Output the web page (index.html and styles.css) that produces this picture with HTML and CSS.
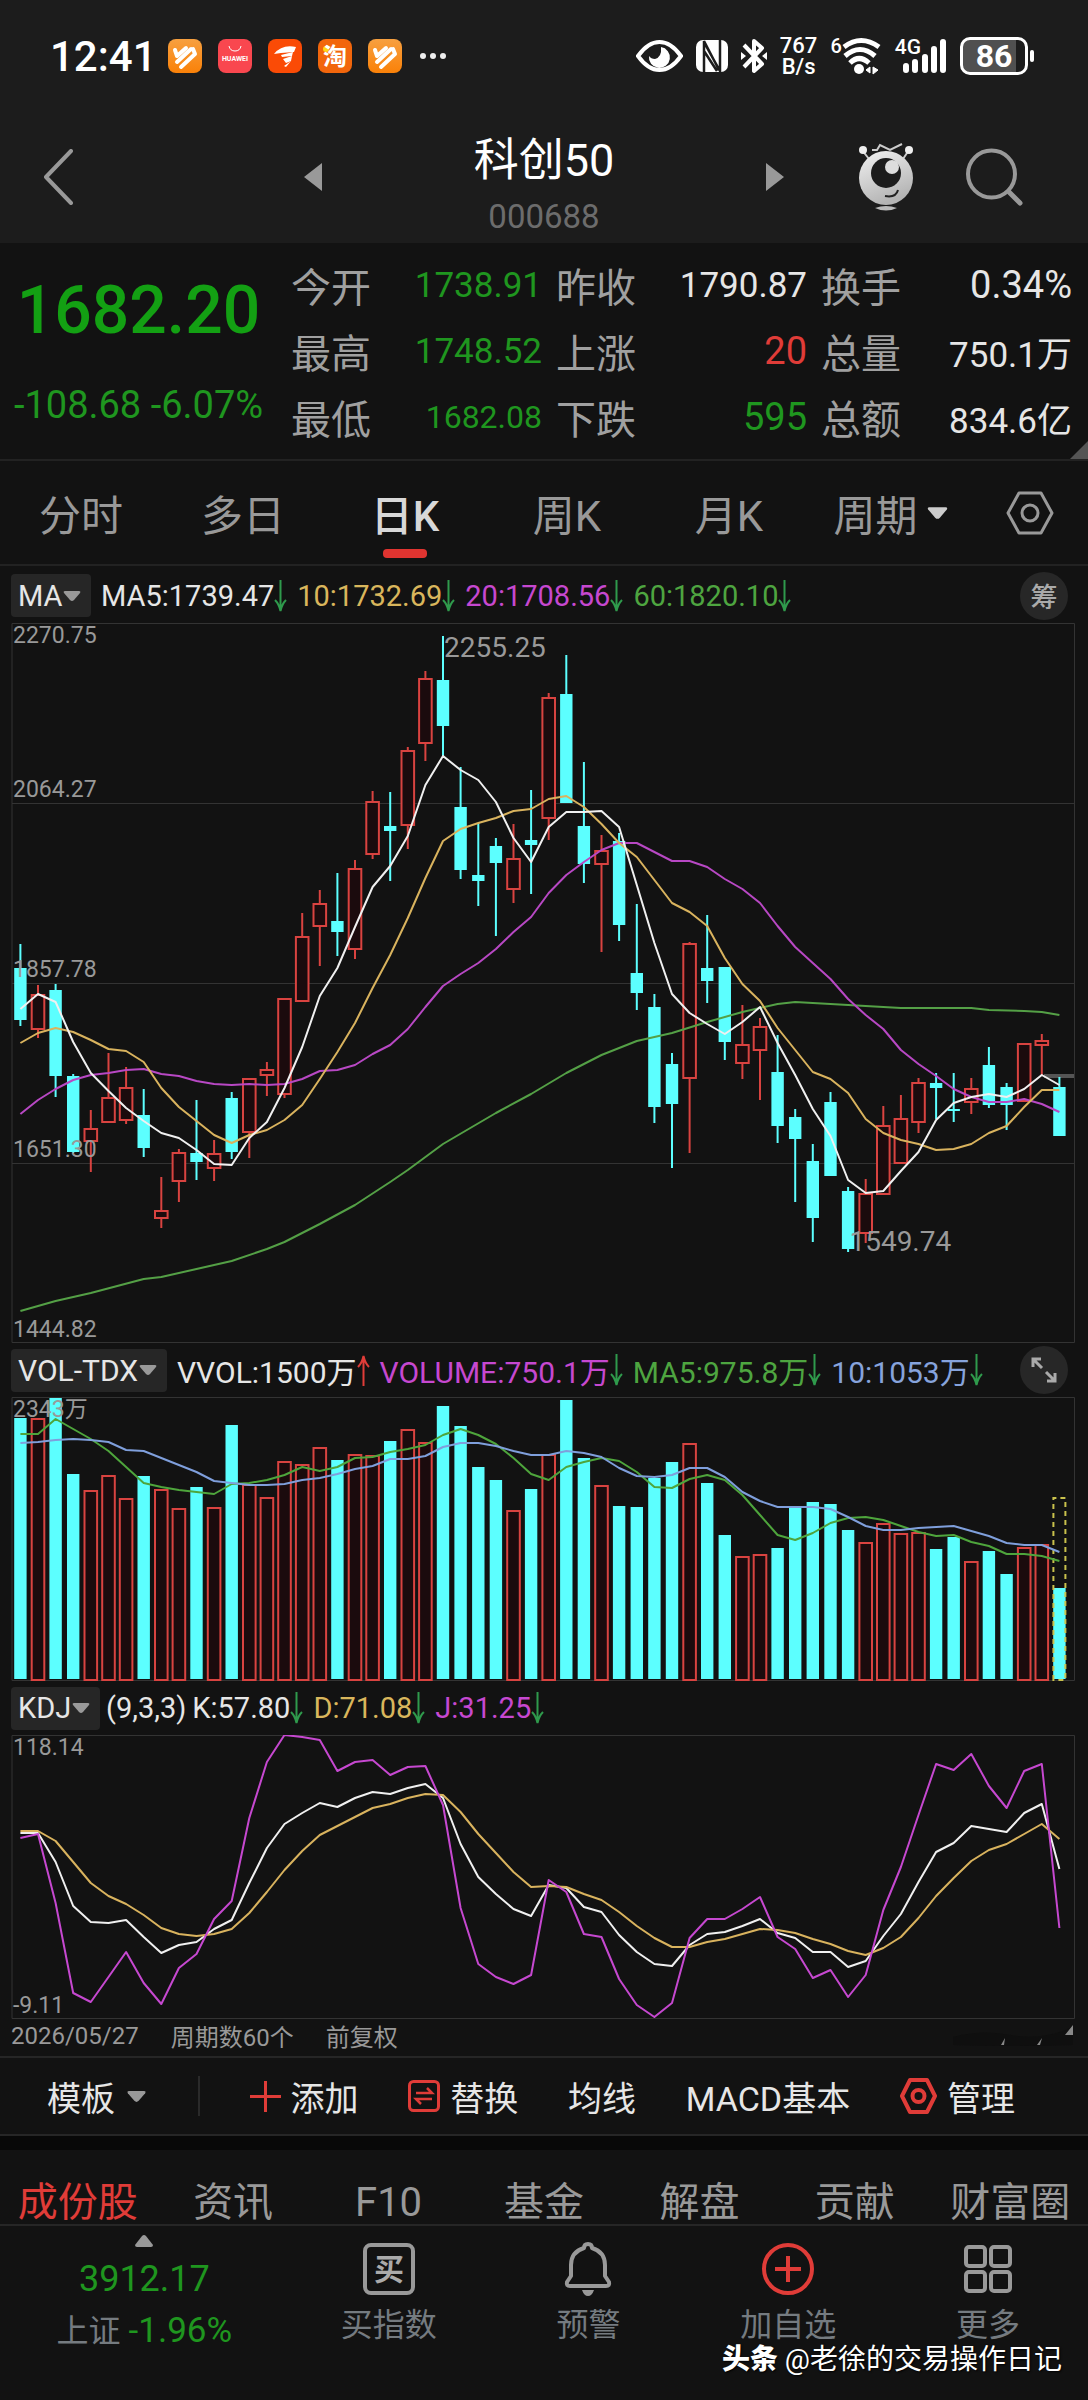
FILE: index.html
```html
<!DOCTYPE html>
<html lang="zh-CN">
<head>
<meta charset="utf-8">
<meta name="viewport" content="width=device-width, initial-scale=1">
<title>科创50 000688</title>
<link rel="stylesheet" href="styles.css">
</head>
<body>
<svg width="0" height="0" class="defs" aria-hidden="true">
  <defs>
    <linearGradient id="orange" x1="0" y1="0" x2="0" y2="1"><stop offset="0" stop-color="#f7a040"/><stop offset="1" stop-color="#fa8108"/></linearGradient>
    <linearGradient id="silver" x1="0" y1="0" x2="0.4" y2="1"><stop offset="0" stop-color="#f2f2f2"/><stop offset="1" stop-color="#b4b4b4"/></linearGradient>
    <symbol id="down" viewBox="0 0 13 32"><path d="M6.5 0V31M1 20Q5 24 6.5 31Q8 24 12 20" fill="none" stroke="#2f9a4c" stroke-width="2"/></symbol>
    <symbol id="up" viewBox="0 0 13 32"><path d="M6.5 32V2M1 13Q5 9 6.5 2Q8 9 12 13" fill="none" stroke="#e03c38" stroke-width="2"/></symbol>
    <symbol id="caret" viewBox="0 0 18 12"><path d="M2 1H16Q18 1 17 3L11 10Q9 12 7 10L1 3Q0 1 2 1Z" fill="currentColor"/></symbol>
    <symbol id="hex" viewBox="0 0 48 44"><path d="M13 2H35L46 22L35 42H13L2 22Z" fill="none" stroke="currentColor" stroke-width="3" stroke-linejoin="round"/><circle cx="24" cy="22" r="8" fill="none" stroke="currentColor" stroke-width="3"/></symbol>
    <symbol id="stripes" viewBox="0 0 34 34"><rect width="34" height="34" rx="8" fill="url(#orange)"/><g fill="none" stroke="#fff" stroke-width="4" stroke-linecap="round" stroke-linejoin="round"><path d="M7 11L9 17L18 9"/><path d="M9 23L23 10"/><path d="M13 28L27 15L25 10"/></g></symbol>
  </defs>
</svg>

<header class="top">
  <div class="status">
    <time class="clock">12:41</time>
    <div class="apps">
      <svg class="app" viewBox="0 0 34 34"><use href="#stripes"/></svg>
      <svg class="app" viewBox="0 0 34 34"><rect width="34" height="34" rx="8" fill="#f9474f"/><path d="M11 7Q12 12 17 12Q22 12 23 7" fill="none" stroke="#fff" stroke-width="1"/><text x="17" y="22" text-anchor="middle" class="huawei">HUAWEI</text></svg>
      <svg class="app" viewBox="0 0 34 34"><rect width="34" height="34" rx="8" fill="#fa4b06"/><g fill="#fff"><path d="M6 15Q14 5 28 8L26 13L13 14Z"/><path d="M13 16L25 13L24 17L14 18Z"/><path d="M15 20L24 17L23 22L18 24Z"/><path d="M16 27L23 22L18 28Z"/></g></svg>
      <svg class="app" viewBox="0 0 34 34"><rect width="34" height="34" rx="8" fill="#f2660c"/><circle cx="8" cy="10" r="3" fill="#ffd617"/><text x="17" y="26" text-anchor="middle" class="tao">淘</text></svg>
      <svg class="app" viewBox="0 0 34 34"><use href="#stripes"/></svg>
    </div>
    <svg class="dots" viewBox="0 0 26 6"><circle cx="3" cy="3" r="3"/><circle cx="13" cy="3" r="3"/><circle cx="23" cy="3" r="3"/></svg>
    <div class="signals">
      <svg width="47" height="34" viewBox="0 0 47 34"><path d="M2 17Q12 3 23.500 3Q35 3 45 17Q35 31 23.500 31Q12 31 2 17Z" fill="none" stroke="#fff" stroke-width="4"/><path d="M25 8A10.500 10.500 0 1 1 13 17Q15 20 19 20Q26 18 25 8Z" fill="#fff"/></svg>
      <svg width="32" height="34" viewBox="0 0 32 34"><rect y="1" width="32" height="32" rx="7" fill="#fff"/><path d="M8 33V2L23 31M24 1V32L9 5M8 12L21 32" fill="none" stroke="#1c1c1c" stroke-width="2.500"/></svg>
      <svg width="26" height="38" viewBox="0 0 26 38"><g fill="none" stroke="#fff" stroke-width="4"><path d="M3 8L21 27L13 34V4L21 11L3 30" stroke-linejoin="round"/></g><path d="M0 15L5 19L0 23ZM26 15L21 19L26 23Z" fill="#fff"/></svg>
      <div class="speed"><span>767</span><span>B/s</span></div>
      <div class="wifi"><small>6</small><svg width="40" height="38" viewBox="0 0 40 38"><g fill="none" stroke="#fff" stroke-width="5"><path d="M2 10Q19 -3 37 10"/><path d="M3 19Q18 6 33 19"/><path d="M8 26Q17 17 27 26"/></g><circle cx="17" cy="32" r="5" fill="#fff"/><path d="M24 33L28 30V36ZM31 30V37L36 33Z" fill="#fff" stroke="#fff"/></svg></div>
      <div class="cell"><small>4G</small><svg width="45" height="36" viewBox="0 0 45 36"><g stroke="#fff" stroke-width="6" stroke-linecap="round"><path d="M4 28V32M13 24V32M23 19V32M32 11V32M41 4V32"/></g></svg></div>
      <div class="battery">86</div>
    </div>
  </div>
  <div class="titlebar">
    <button class="icon back" aria-label="返回"><svg width="30" height="56" viewBox="0 0 30 56"><path d="M28 2L3 28L28 54" fill="none" stroke="#999" stroke-width="4" stroke-linecap="round" stroke-linejoin="round"/></svg></button>
    <div class="switcher">
      <button class="icon" aria-label="上一个"><svg width="18" height="28" viewBox="0 0 18 28"><path d="M18 0V28L0 14Z" fill="#999"/></svg></button>
      <div class="name"><h1>科创50</h1><p>000688</p></div>
      <button class="icon" aria-label="下一个"><svg width="18" height="28" viewBox="0 0 18 28"><path d="M0 0V28L18 14Z" fill="#999"/></svg></button>
    </div>
    <div class="actions">
      <button class="icon" aria-label="助手"><svg width="56" height="70" viewBox="0 0 56 70"><path d="M4 8L11 17M51 8L45 17M14 8L19 8L22 3L32 8L44 2" fill="none" stroke="#ccc" stroke-width="2"/><circle cx="5" cy="8" r="4" fill="#eee"/><circle cx="51" cy="8" r="4" fill="#eee"/><circle cx="28" cy="36" r="27" fill="url(#silver)"/><circle cx="28" cy="31" r="15" fill="#1c1c1c"/><circle cx="34" cy="25" r="7" fill="#ddd"/><path d="M27 54Q38 56 40 48" fill="none" stroke="#222" stroke-width="2"/><path d="M17 66Q28 62 39 66Q28 71 17 66Z" fill="#bbb"/></svg></button>
      <button class="icon" aria-label="搜索"><svg width="57" height="58" viewBox="0 0 57 58"><circle cx="25.500" cy="26" r="23.500" fill="none" stroke="#999" stroke-width="4"/><path d="M43 44L54 55" stroke="#999" stroke-width="5" stroke-linecap="round"/></svg></button>
    </div>
  </div>
</header>

<section class="quote">
  <div class="price"><strong>1682.20</strong><span>-108.68 -6.07%</span></div>
  <dl>
    <div><dt>今开</dt><dd class="green">1738.91</dd></div>
    <div><dt>昨收</dt><dd>1790.87</dd></div>
    <div><dt>换手</dt><dd class="big">0.34%</dd></div>
    <div><dt>最高</dt><dd class="green">1748.52</dd></div>
    <div><dt>上涨</dt><dd class="big red">20</dd></div>
    <div><dt>总量</dt><dd>750.1万</dd></div>
    <div><dt>最低</dt><dd class="small green">1682.08</dd></div>
    <div><dt>下跌</dt><dd class="big green">595</dd></div>
    <div><dt>总额</dt><dd>834.6亿</dd></div>
  </dl>
</section>

<nav class="periods">
  <button>分时</button><button>多日</button><button class="on">日K</button><button>周K</button><button>月K</button>
  <button class="more">周期<svg width="23" height="14" viewBox="0 0 18 12"><use href="#caret"/></svg></button>
  <button aria-label="设置"><svg width="48" height="44"><use href="#hex"/></svg></button>
</nav>

<main>
  <section>
    <div class="legend first">
      <div class="chip"><select aria-label="主图指标"><option>MA</option></select><svg width="18" height="12"><use href="#caret"/></svg></div>
      <span>MA5:1739.47<svg class="arrow"><use href="#down"/></svg></span>
      <span class="yellow">10:1732.69<svg class="arrow"><use href="#down"/></svg></span>
      <span class="pink">20:1708.56<svg class="arrow"><use href="#down"/></svg></span>
      <span class="lime">60:1820.10<svg class="arrow"><use href="#down"/></svg></span>
      <button class="round">筹</button>
    </div>
    <div class="panel tall">
      <svg id="candles" viewBox="0 0 1064 720"></svg>
      <div class="axis rows">
        <div><span>2270.75</span><span>2064.27</span></div>
        <div><span>1857.78</span></div>
        <div><span>1651.30</span></div>
        <div><span>1444.82</span></div>
      </div>
      <span class="mark high">2255.25</span>
      <span class="mark low">1549.74</span>
    </div>
  </section>
  <section>
    <div class="legend wide">
      <div class="chip"><select aria-label="成交量指标"><option>VOL-TDX</option></select><svg width="18" height="12"><use href="#caret"/></svg></div>
      <span>VVOL:1500万<svg class="arrow"><use href="#up"/></svg></span>
      <span class="pink">VOLUME:750.1万<svg class="arrow"><use href="#down"/></svg></span>
      <span class="lime">MA5:975.8万<svg class="arrow"><use href="#down"/></svg></span>
      <span class="blue">10:1053万<svg class="arrow"><use href="#down"/></svg></span>
      <button class="round" aria-label="全屏"><svg width="26" height="26" viewBox="0 0 26 26"><path d="M2 10V2H10M2 2L11 11M24 16V24H16M24 24L15 15" fill="none" stroke="#aaa" stroke-width="3"/></svg></button>
    </div>
    <div class="panel">
      <svg id="volume" viewBox="0 0 1064 284"></svg>
      <div class="axis ends"><span>2343万</span></div>
    </div>
  </section>
  <section>
    <div class="legend">
      <div class="chip"><select aria-label="副图指标"><option>KDJ</option></select><svg width="18" height="12"><use href="#caret"/></svg></div>
      <span class="params">(9,3,3)</span>
      <span>K:57.80<svg class="arrow"><use href="#down"/></svg></span>
      <span class="yellow">D:71.08<svg class="arrow"><use href="#down"/></svg></span>
      <span class="pink">J:31.25<svg class="arrow"><use href="#down"/></svg></span>
    </div>
    <div class="panel">
      <svg id="kdj" viewBox="0 0 1064 284"></svg>
      <div class="axis ends"><span>118.14</span><span>-9.11</span></div>
    </div>
  </section>
  <div class="range"><span>2026/05/27</span><span>周期数60个</span><span>前复权</span>
    <svg width="124" height="26" viewBox="0 0 124 26"><path d="M2 14Q30 6 60 12T122 4V22Q60 24 2 22Z" fill="#0f0f0f"/><path d="M50 22L54 15L53 22ZM86 22L91 15L89 22ZM114 12L122 2V12Z" fill="#888"/></svg></div>
</main>

<div class="tools">
  <button>模板<svg class="grey" width="23" height="13" viewBox="0 0 18 12"><use href="#caret"/></svg></button>
  <i></i>
  <button><svg width="31" height="31" viewBox="0 0 31 31"><path d="M15.500 0V31M0 15.500H31" stroke="#e03c38" stroke-width="3"/></svg>添加</button>
  <button><svg width="32" height="32" viewBox="0 0 32 32"><g fill="none" stroke="#e03c38" stroke-width="3"><rect x="1.500" y="1.500" width="29" height="29" rx="4"/><path d="M8 13H24L19 8M24 19H8L13 24" stroke-width="2.500"/></g></svg>替换</button>
  <button>均线</button>
  <button>MACD基本</button>
  <button><svg class="red" width="37" height="36" viewBox="0 0 37 36"><g fill="none" stroke="currentColor" stroke-width="4"><path d="M10 2H27L35 18L27 34H10L2 18Z" stroke-linejoin="round"/><circle cx="18.500" cy="18" r="6"/></g></svg>管理</button>
</div>

<nav class="tabs">
  <a href="#" class="on">成份股</a><a href="#">资讯</a><a href="#">F10</a><a href="#">基金</a><a href="#">解盘</a><a href="#">贡献</a><a href="#">财富圈</a>
</nav>

<footer class="dock">
  <button class="index"><svg width="20" height="12" viewBox="0 0 20 12"><path d="M8 1Q10 -1 12 1L19 10Q19 12 17 12H3Q1 12 1 10Z" fill="#999"/></svg><b>3912.17</b><span>上证 <em>-1.96%</em></span></button>
  <button><svg width="52" height="52" viewBox="0 0 52 52"><rect x="2" y="2" width="48" height="48" rx="6" fill="none" stroke="#999" stroke-width="4"/><text x="26" y="37" text-anchor="middle" class="buy">买</text></svg>买指数</button>
  <button><svg width="52" height="56" viewBox="0 0 52 56"><path d="M26 3Q22 3 22 7Q9 11 9 24V35L5 41Q4 45 8 45H44Q48 45 47 41L43 35V24Q43 11 30 7Q30 3 26 3Z" fill="none" stroke="#999" stroke-width="4" stroke-linejoin="round"/><path d="M20 49H32Q30 55 26 55Q22 55 20 49Z" fill="#999"/></svg>预警</button>
  <button><svg width="54" height="54" viewBox="0 0 54 54"><g fill="none" stroke="#e03c38" stroke-width="4"><circle cx="27" cy="27" r="24"/><path d="M27 14V40M14 27H40"/></g></svg>加自选</button>
  <button><svg width="50" height="50" viewBox="0 0 50 50"><g fill="none" stroke="#999" stroke-width="4"><rect x="3" y="3" width="19" height="19" rx="3"/><rect x="28" y="3" width="19" height="19" rx="3"/><rect x="3" y="28" width="19" height="19" rx="3"/><rect x="28" y="28" width="19" height="19" rx="3"/></g></svg>更多</button>
  <p class="credit"><b>头条</b> @老徐的交易操作日记</p>
</footer>
<script src="charts.js"></script>
</body>
</html>
```
FILE: styles.css
```css
* { box-sizing: border-box; margin: 0; padding: 0; }
body {
  background: #121212;
  color: #e6e6e6;
  font-family: Roboto, "Noto Sans CJK SC", sans-serif;
  white-space: nowrap;
}
button, select { background: none; border: 0; color: inherit; font: inherit; }
svg { display: block; flex: none; }
.defs { position: absolute; }
em, i { font-style: normal; }

.green { color: #1f961f; }
.red { color: #e03c38; }
.yellow { color: #d9b65c; }
.pink { color: #c648d0; }
.lime { color: #4ea540; }
.blue { color: #86a3dc; }

/* Status bar */
.top { background: #1c1c1c; }
.status { display: flex; align-items: center; height: 110px; padding: 2px 52px 0 50px; color: #fff; }
.clock { width: 118px; font-size: 42px; font-weight: 500; }
.apps { display: flex; gap: 16px; }
.app { width: 34px; height: 34px; }
.huawei { fill: #fff; font-size: 7px; font-weight: 700; }
.tao { fill: #fff; font-size: 24px; font-weight: 700; }
.dots { width: 26px; height: 6px; margin-left: 18px; fill: #eee; }
.signals { display: flex; align-items: center; gap: 13px; margin-left: auto; }
.speed { display: grid; line-height: 21px; font-size: 22px; font-weight: 500; text-align: center; }
.wifi, .cell { display: flex; align-items: flex-start; }
.wifi small { font-size: 20px; line-height: 18px; font-weight: 500; }
.cell small { font-size: 21px; line-height: 18px; font-weight: 500; }
.cell small + svg { margin-left: -19px; }
.battery {
  position: relative;
  width: 68px;
  height: 38px;
  margin-right: 8px;
  border: 3px solid #fff;
  border-radius: 10px;
  background: linear-gradient(90deg, #505050 86%, transparent 86%);
  font-size: 32px;
  font-weight: 700;
  line-height: 32px;
  text-align: center;
}
.battery::after { content: ""; position: absolute; left: 67px; top: 10px; width: 4px; height: 12px; border-radius: 2px; background: #fff; }

/* Title bar */
.titlebar { display: grid; grid-template-columns: 1fr 480px 1fr; align-items: center; height: 133px; }
.back { justify-self: start; margin-left: 43px; }
.switcher { display: flex; align-items: center; justify-content: space-between; }
.name { padding-top: 14px; text-align: center; }
.name h1 { font-size: 45px; font-weight: 400; line-height: 60px; color: #fff; }
.name p { padding-top: 6px; font-size: 33px; line-height: 40px; color: #6c6c6c; }
.actions { display: flex; align-items: center; justify-content: flex-end; gap: 52px; padding-right: 65px; }

/* Quote */
.quote { position: relative; display: grid; grid-template-columns: 277px 1fr; height: 218px; border-bottom: 2px solid #222; }
.quote::after { content: ""; position: absolute; right: 0; bottom: 0; width: 18px; height: 18px; background: #555; clip-path: polygon(100% 0, 100% 100%, 0 100%); }
.price { display: flex; flex-direction: column; align-items: center; padding-top: 28px; color: #13a013; }
.price strong { font-size: 66px; font-weight: 500; line-height: 80px; }
.price span { padding-top: 34px; font-size: 38px; line-height: 40px; color: #1f961f; }
.quote dl { display: grid; grid-template-columns: repeat(3, 1fr); grid-auto-rows: 66px; column-gap: 14px; padding: 9px 16px 0 14px; }
.quote dl div { display: flex; align-items: center; justify-content: space-between; }
.quote dt { font-size: 40px; color: #a0a0a0; }
.quote dd { font-size: 35px; }
.quote dd.big { font-size: 38px; }
.quote dd.small { font-size: 32px; }

/* Period tabs */
.periods { display: grid; grid-template-columns: repeat(6, 162fr) 116fr; height: 105px; border-bottom: 2px solid #222; color: #999; font-size: 42px; }
.periods button { position: relative; display: flex; align-items: center; justify-content: center; }
.periods .on { color: #d8d8d8; font-weight: 500; }
.periods .on::after { content: ""; position: absolute; bottom: 6px; width: 44px; height: 9px; border-radius: 4px; background: #e03430; }
.periods .more { gap: 8px; }
.periods .more svg { color: #ccc; }

/* Chart panels */
main { padding: 0 13px 0 11px; }
.legend { display: flex; align-items: center; gap: 10px; height: 54px; font-size: 29px; }
.legend.first { height: 57px; padding-top: 2px; }
.legend.wide { font-size: 30px; }
.legend > span { display: flex; align-items: center; }
.legend .params { margin: 0 -4px 0 -4px; }
.chip { display: flex; align-items: center; height: 43px; padding: 0 10px 0 7px; border-radius: 4px; background: #262626; }
.chip select { appearance: none; }
.chip svg { color: #999; }
.arrow { width: 13px; height: 32px; }
.round { display: grid; place-items: center; width: 48px; height: 48px; margin: 0 7px 0 auto; border-radius: 50%; background: #272727; color: #aaa; font-size: 27px; font-weight: 500; }
.panel { position: relative; aspect-ratio: 1064 / 284; }
.panel.tall { aspect-ratio: 1064 / 720; }
.panel > svg { width: 100%; height: 100%; }
.axis { position: absolute; inset: 0; display: flex; flex-direction: column; padding-left: 2px; color: #999; font-size: 23px; line-height: 26px; }
.ends { justify-content: space-between; }
.rows div { flex: 1; display: flex; flex-direction: column; justify-content: flex-end; }
.rows div:first-child { justify-content: space-between; }
.mark { position: absolute; color: #999; font-size: 28px; line-height: 36px; }
.high { left: 40.7%; top: 1%; }
.low { left: 78.8%; top: 83.5%; }
.range { display: flex; align-items: center; gap: 32px; height: 37px; padding-bottom: 4px; font-size: 24px; color: #999; }
.range svg { margin-left: auto; }

/* Indicator toolbar */
.tools { display: flex; align-items: center; justify-content: space-between; height: 80px; padding: 0 73px 0 47px; border: solid #262626; border-width: 2px 0; font-size: 34px; }
.tools button { display: flex; align-items: center; gap: 10px; }
.tools i { width: 2px; height: 40px; background: #2a2a2a; }
.tools .grey { color: #999; }

/* Section tabs */
.tabs { display: grid; grid-template-columns: repeat(7, 1fr); height: 90px; padding-top: 28px; border-top: 14px solid #080808; border-bottom: 2px solid #262626; font-size: 40px; line-height: 50px; text-align: center; }
.tabs a { display: flex; justify-content: center; color: #999; text-decoration: none; }
.tabs .on { color: #e03c38; }

/* Bottom dock */
.dock { position: relative; display: grid; grid-template-columns: 289fr repeat(4, 200fr); min-height: 174px; padding-bottom: 48px; font-size: 32px; color: #757b80; }
.dock button { display: grid; grid-template-rows: 52px 40px; align-content: start; align-items: center; justify-items: center; row-gap: 10px; padding-top: 17px; line-height: 40px; }
.dock .index { grid-template-rows: 12px 40px 40px; padding-top: 9px; row-gap: 12px; }
.index b { font-size: 36px; font-weight: 400; }
.index b, .index em { color: #1f961f; }
.index em { font-size: 35px; }
.buy { fill: #aaa; font-size: 30px; font-weight: 700; }
.credit { position: absolute; right: 26px; bottom: 22px; color: #fff; font-size: 28px; line-height: 36px; text-shadow: 1px 1px 2px #000; }
.credit b { font-weight: 900; }
```
FILE: charts.js
```js
// One row per session: direction (1 = up), high, body top, body bottom, low, volume top.
const bars = [
  [0,321,345,397,403,21],[1,362,371,407,415,21],[0,361,367,453,474,1],[0,451,453,529,530,77],[1,487,505,519,549,93],
  [1,430,474,500,500,78],[1,444,464,498,501,101],[0,466,492,525,534,79],[1,554,587,596,605,92],[1,526,529,559,579,111],
  [0,477,530,539,557,90],[1,517,530,546,558,110],[0,469,475,529,536,28],[1,455,455,510,535,87],[1,439,446,453,473,100],
  [1,375,375,472,475,64],[1,290,313,379,379,67],[1,267,280,304,343,50],[0,250,298,309,333,63],[1,237,245,327,336,57],
  [1,168,178,232,236,58],[0,169,203,208,258,44],[1,124,127,203,226,32],[1,48,55,121,138,45],[0,13,57,103,134,9],
  [0,144,184,247,256,29],[0,200,252,258,283,70],[0,215,223,240,313,83],[1,201,235,267,280,113],[0,167,217,222,271,92],
  [1,70,74,196,217,57],[0,32,71,180,180,3],[0,139,203,241,260,61],[1,212,227,242,329,88],[0,210,218,302,318,109],
  [0,281,350,370,387,110],[0,371,384,484,500,81],[0,430,441,481,545,65],[1,319,320,456,530,46],[0,292,345,358,380,86],
  [0,344,344,419,437,138],[1,382,421,441,456,159],[1,395,403,428,477,157],[0,412,449,503,520,151],[0,486,494,516,579,111],
  [0,521,538,595,619,105],[0,469,479,553,553,107],[0,564,568,626,629,133],[1,556,570,611,620,145],[1,483,502,572,572,126],
  [1,472,495,541,541,136],[1,455,459,500,510,135],[0,450,460,465,496,152],[0,450,486,488,499,140],[1,455,465,480,491,164],
  [0,424,442,482,485,154],[0,460,464,482,507,177],[1,420,420,479,479,150],[1,411,417,423,452,147],[0,454,464,513,513,191]
];

const lines = {
  candles: {
    '#54a046': [[0,688],[2,678],[4,670],[7,656],[8,654],[10,646],[12,638],[14,626],[15,619],[17,601],[19,582],[21,559],[22,547],[24,521],[27,490],[29,471],[31,450],[33,432],[35,418],[37,410],[39,399],[41,389],[43,381],[44,379],[46,381],[48,383],[50,385],[54,385],[55,387],[57,388],[58,389],[59,392]],
    '#b848c4': [491,477,466,457,452,450,447,446,451,453,458,461,462,461,462,461,456,448,447,442,431,422,406,384,363,351,340,326,309,294,270,252,239,227,220,220,229,238,238,244,256,266,280,303,324,340,356,376,392,406,427,441,453,466,474,479,479,476,481,489],
    '#d9b35e': [420,410,405,409,417,426,428,439,465,484,498,512,520,512,507,497,482,456,429,400,365,332,295,255,218,206,200,195,188,186,176,173,184,201,220,234,257,280,289,303,335,361,378,405,427,449,456,470,496,510,517,521,527,526,521,510,503,484,467,467],
    '#f0f0f0': [386,371,379,419,450,468,485,498,510,515,527,541,542,515,499,465,424,373,345,304,264,243,213,162,133,147,157,179,215,239,204,189,189,188,204,262,320,371,390,401,411,399,384,420,452,486,513,557,570,568,548,529,497,480,474,471,474,466,452,462]
  },
  volume: {
    '#4ea53c': [37,37,22,32,42,54,70,86,90,93,95,97,87,86,83,78,70,74,70,61,60,55,52,48,38,32,38,47,61,77,83,70,65,61,64,75,90,91,82,78,83,98,118,138,143,136,126,121,120,123,129,135,139,138,145,149,157,157,159,164],
    '#7f9fdc': [46,45,43,42,43,45,53,54,61,68,75,84,86,88,88,87,83,81,77,72,69,62,62,59,50,46,46,49,54,58,58,54,56,60,71,79,80,78,71,71,80,95,104,110,110,110,112,120,129,133,133,131,130,129,134,139,146,148,148,155]
  },
  kdj: {
    '#f0f0f0': [98,98,127,171,187,188,185,202,218,210,207,194,185,148,113,89,78,68,72,63,57,59,53,49,63,109,142,159,174,181,150,153,172,177,200,217,229,231,210,199,197,191,184,198,203,217,217,232,226,201,179,147,117,108,91,94,97,78,69,134],
    '#d9b35e': [96,96,106,127,148,161,169,180,193,199,201,199,194,178,157,135,116,100,91,82,73,69,63,59,60,77,99,118,137,152,151,152,159,165,177,191,203,212,212,207,204,199,194,195,198,204,209,216,220,213,202,183,161,143,126,115,109,99,89,104],
    '#c648d0': [103,99,168,258,267,242,217,248,269,233,219,184,166,83,27,0,2,5,36,27,25,40,32,31,70,173,229,242,249,240,145,157,199,202,244,270,282,268,203,184,184,174,162,202,214,243,235,262,240,175,132,80,29,35,19,51,73,36,29,193]
  }
};

const UP = '#d94340', DOWN = '#5cffff', GRID = '#333';
const x = i => +(9.4 + 17.61 * i).toFixed(1);

const frame = h => `<path d="M1 .5H1063.500V${h - .5}H1Z" fill="none" stroke="${GRID}"/>`;
const box = (i, top, bottom, up) => up
  ? `<rect x="${x(i) - 6.3}" y="${top + 1}" width="12.600" height="${Math.max(bottom - top - 2, 2)}" fill="#1b0b0d" stroke="${UP}" stroke-width="2"/>`
  : `<rect x="${x(i) - 6.2}" y="${top}" width="12.400" height="${bottom - top}" fill="${DOWN}"/>`;
const plot = set => Object.entries(set).map(([color, pts]) => {
  const p = pts.map((v, i) => Array.isArray(v) ? `${x(v[0])},${v[1]}` : `${x(i)},${v}`).join(' ');
  return `<polyline points="${p}" fill="none" stroke="${color}" stroke-width="2" stroke-linejoin="round"/>`;
}).join('');

document.getElementById('candles').innerHTML =
  frame(720) +
  `<path d="M1 180.500H1063M1 360.500H1063M1 540.500H1063" stroke="${GRID}"/>` +
  `<path d="M1033 453H1063" stroke="#555" stroke-width="4"/>` +
  bars.map(([up, hi, top, bottom, lo], i) =>
    `<path d="M${x(i)} ${hi}V${lo}" stroke="${up ? UP : DOWN}" stroke-width="2"/>` + box(i, top, bottom, up)).join('') +
  plot(lines.candles);

document.getElementById('volume').innerHTML =
  frame(284) +
  bars.map(([up, , , , , v], i) => box(i, v, up ? 284 : 282, up)).join('') +
  `<path d="M${x(59) - 6} 283V101H${x(59) + 6}V283Z" fill="none" stroke="#c9c14c" stroke-width="2" stroke-dasharray="5 4"/>` +
  plot(lines.volume);

document.getElementById('kdj').innerHTML = frame(284) + plot(lines.kdj);
```
